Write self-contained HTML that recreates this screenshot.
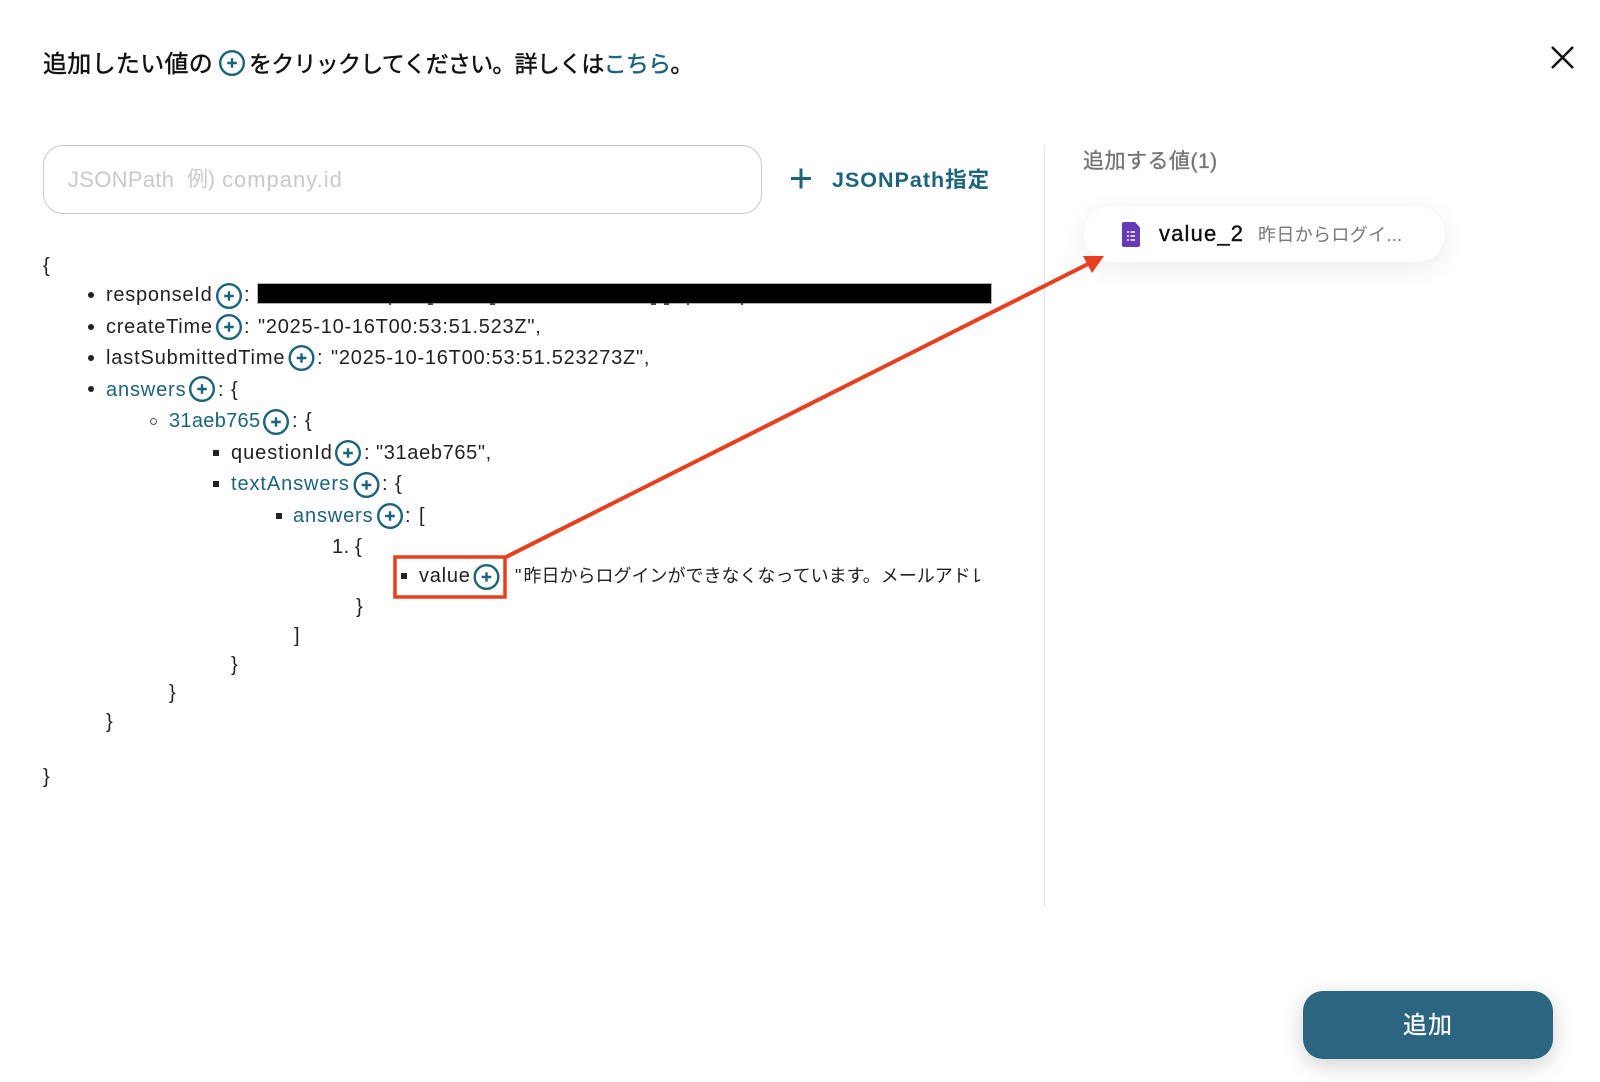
<!DOCTYPE html>
<html lang="ja"><head><meta charset="utf-8"><title>追加</title>
<style>
html,body{margin:0;padding:0;background:#fff}
body{width:1600px;height:1082px;position:relative;overflow:hidden;font-family:"Liberation Sans","Noto Sans CJK JP",sans-serif;color:#222}
.t{position:absolute;white-space:nowrap;font-size:20px;line-height:30px;height:30px;letter-spacing:.55px}
.l{color:#1c637c}
.b{position:absolute;width:6px;height:6px;background:#222}
.d{position:absolute;width:6px;height:6px;border-radius:50%;background:#222}
.h{font-size:23px;color:#111;font-family:'Noto Sans CJK JP',sans-serif;-webkit-text-stroke:.45px currentColor}
svg{position:absolute;left:0;top:0}
</style></head><body>
<div class="t h" style="left:43px;top:47px;font-size:24px;letter-spacing:.3px">追加したい値の</div>
<div class="t h" style="left:249px;top:47px;letter-spacing:-.75px">をクリックしてください。詳しくは<span class="l">こちら</span>。</div>

<div style="position:absolute;left:43px;top:145px;width:717px;height:67px;border:1.5px solid #c8c8c8;border-radius:20px"></div>
<div class="t" style="left:68px;top:165px;font-size:22px;color:#c9c9c9;letter-spacing:.3px">JSONPath</div>
<div class="t" style="left:187px;top:165px;font-size:21px;color:#c9c9c9;letter-spacing:0">例)</div>
<div class="t" style="left:222px;top:165px;font-size:22px;color:#c9c9c9;letter-spacing:1px">company.id</div>
<div class="t l" style="left:832px;top:165px;font-size:21.500px;font-weight:700;letter-spacing:1px">JSONPath指定</div>

<div style="position:absolute;left:1044px;top:145px;width:1px;height:761px;background:#e2e2e2"></div>
<div class="t" style="left:1083px;top:147px;font-size:21px;color:#757575;letter-spacing:.5px;-webkit-text-stroke:.35px #757575">追加する値(1)</div>
<div style="position:absolute;left:1084px;top:206px;width:361px;height:56px;border-radius:28px;background:#fff;box-shadow:0 6px 24px rgba(0,0,0,.08)"></div>
<div class="t" style="left:1159px;top:219px;font-size:22px;color:#111;letter-spacing:1.15px;-webkit-text-stroke:.4px #111">value_2</div>
<div class="t" style="left:1258px;top:220px;font-size:18px;color:#777;letter-spacing:.35px">昨日からログイ...</div>

<div class="t" style="left:43px;top:251px">{</div>
<div class="d" style="left:88px;top:292px"></div>
<div class="t" style="left:106px;top:280px;letter-spacing:.75px">responseId</div><div class="t" style="left:244px;top:280px">:</div>
<div style="position:absolute;left:258px;top:284px;width:733px;height:19px;background:#000;outline:1px solid rgba(0,0,0,.3)"></div>
<div style="position:absolute;left:389px;top:303px;width:2px;height:2px;background:#444"></div>
<div style="position:absolute;left:428px;top:303px;width:5px;height:2px;background:#444"></div>
<div style="position:absolute;left:490px;top:303px;width:5px;height:2px;background:#444"></div>
<div style="position:absolute;left:651px;top:303px;width:5px;height:2px;background:#444"></div>
<div style="position:absolute;left:664px;top:303px;width:5px;height:2px;background:#444"></div>
<div style="position:absolute;left:687px;top:303px;width:2px;height:2px;background:#444"></div>
<div style="position:absolute;left:741px;top:303px;width:2px;height:2px;background:#444"></div>

<div class="d" style="left:88px;top:324px"></div>
<div class="t" style="left:106px;top:312px;letter-spacing:.75px">createTime</div><div class="t" style="left:244px;top:312px">:</div><div class="t" style="left:258px;top:312px;letter-spacing:.75px">"2025-10-16T00:53:51.523Z",</div>

<div class="d" style="left:88px;top:355px"></div>
<div class="t" style="left:106px;top:343px;letter-spacing:.85px">lastSubmittedTime</div><div class="t" style="left:317px;top:343px">:</div><div class="t" style="left:331px;top:343px;letter-spacing:.75px">"2025-10-16T00:53:51.523273Z",</div>

<div class="d" style="left:88px;top:386px"></div>
<div class="t l" style="left:106px;top:375px;letter-spacing:.85px">answers</div><div class="t" style="left:218px;top:375px">:</div><div class="t" style="left:231px;top:375px">{</div>

<div style="position:absolute;left:150px;top:418px;width:5px;height:5px;border:1px solid #555;border-radius:50%"></div>
<div class="t l" style="left:169px;top:406px;letter-spacing:.3px">31aeb765</div><div class="t" style="left:292px;top:406px">:</div><div class="t" style="left:305px;top:406px">{</div>

<div class="b" style="left:213px;top:450px"></div>
<div class="t" style="left:231px;top:438px;letter-spacing:.95px">questionId</div><div class="t" style="left:364px;top:438px">:</div><div class="t" style="left:376px;top:438px;letter-spacing:.65px">"31aeb765",</div>

<div class="b" style="left:213px;top:481px"></div>
<div class="t l" style="left:231px;top:469px;letter-spacing:.9px">textAnswers</div><div class="t" style="left:382px;top:469px">:</div><div class="t" style="left:395px;top:469px">{</div>

<div class="b" style="left:276px;top:513px"></div>
<div class="t l" style="left:293px;top:501px;letter-spacing:.85px">answers</div><div class="t" style="left:405px;top:501px">:</div><div class="t" style="left:419px;top:501px">[</div>

<div class="t" style="left:332px;top:532px">1.</div><div class="t" style="left:355px;top:532px">{</div>

<div class="b" style="left:401px;top:573px"></div>
<div class="t" style="left:419px;top:561px;letter-spacing:.75px">value</div>
<div style="position:absolute;left:515px;top:561px;width:465px;height:30px;overflow:hidden"><div class="t" style="left:0;top:0;font-size:18px;letter-spacing:0">"</div><div class="t" style="left:8.500px;top:0;font-size:18px;letter-spacing:0">昨日からログインができなくなっています。メールアドレス</div></div>

<div class="t" style="left:356px;top:592px">}</div>
<div class="t" style="left:294px;top:621px">]</div>
<div class="t" style="left:231px;top:650px">}</div>
<div class="t" style="left:169px;top:678px">}</div>
<div class="t" style="left:106px;top:707px">}</div>
<div class="t" style="left:43px;top:762px">}</div>

<div style="position:absolute;left:1303px;top:991px;width:250px;height:68px;border-radius:20px;background:#2c657f;box-shadow:0 6px 22px rgba(0,0,0,.18);color:#fff;font-size:24px;line-height:70px;text-align:center;letter-spacing:1px;-webkit-text-stroke:.3px #fff">追加</div>

<svg width="1600" height="1082" viewBox="0 0 1600 1082" xmlns="http://www.w3.org/2000/svg">
<defs><g id="p"><circle r="11.8" fill="#fff" stroke="#1c637c" stroke-width="2.400"/><path d="M-4.800 0H4.800M0-4.800V4.800" stroke="#1c637c" stroke-width="2.400" fill="none"/></g></defs>
<use href="#p" x="232" y="63"/>
<use href="#p" x="229" y="296"/>
<use href="#p" x="229" y="327"/>
<use href="#p" x="301.500" y="358"/>
<use href="#p" x="202" y="389"/>
<use href="#p" x="276" y="422"/>
<use href="#p" x="348" y="453"/>
<use href="#p" x="366.500" y="485"/>
<use href="#p" x="390" y="516"/>
<use href="#p" x="486.500" y="577"/>
<path d="M791 178.500H811M801 168.500V188.500" stroke="#1c637c" stroke-width="3" fill="none"/>
<path d="M1552 47L1573 68M1573 47L1552 68" stroke="#111" stroke-width="2.500" fill="none"/>
<rect x="395" y="557" width="110" height="40" fill="none" stroke="#e8401f" stroke-width="3.500"/>
<path d="M506 557L1092 262" stroke="#e8401f" stroke-width="4" fill="none"/>
<path d="M1104 256L1083 256L1092 273Z" fill="#e8401f"/>
<path d="M1127 222H1135L1140 227.500V245A2 2 0 0 1 1138 247H1124A2 2 0 0 1 1122 245V224A2 2 0 0 1 1124 222Z" fill="#673ab7"/>
<path d="M1127 232H1129M1127 236H1129M1127 240H1129M1130.500 232H1135M1130.500 236H1135M1130.500 240H1135" stroke="#fff" stroke-width="1.500" fill="none"/>
</svg>
</body></html>
